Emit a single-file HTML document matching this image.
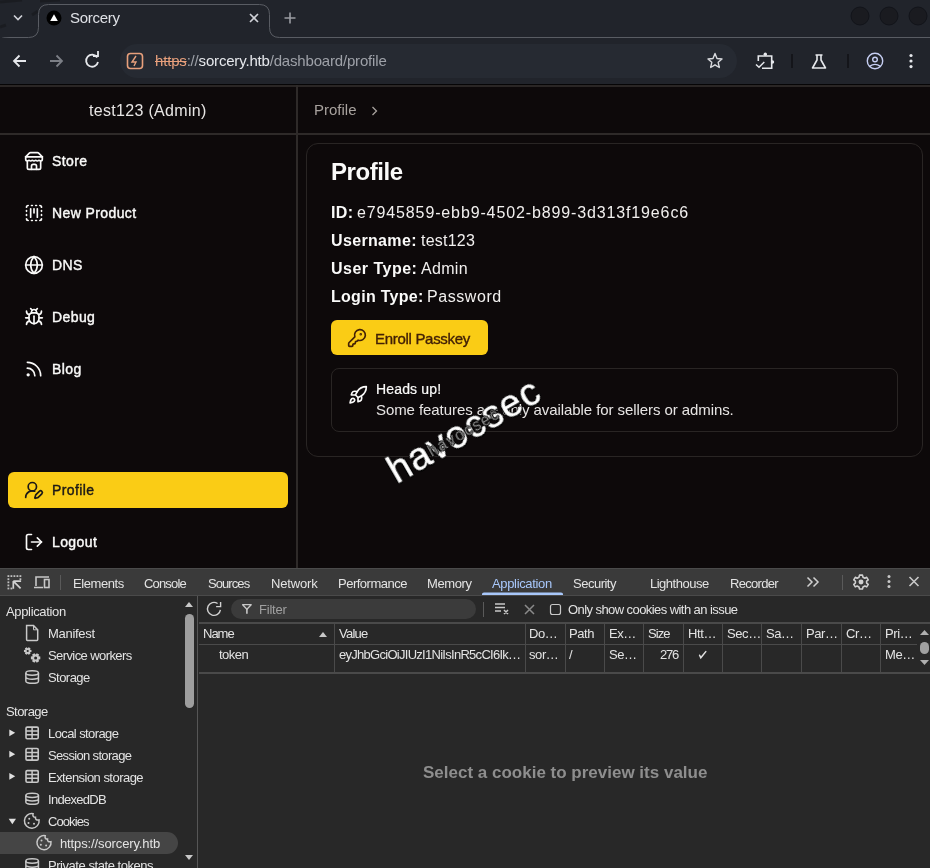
<!DOCTYPE html>
<html><head><meta charset="utf-8">
<style>
*{box-sizing:border-box;margin:0;padding:0}
html,body{width:930px;height:868px;overflow:hidden;background:#0d090a;font-family:"Liberation Sans",sans-serif}
.abs{position:absolute}
#strip{left:0;top:0;width:930px;height:38px;background:#21242b}
#toolbar{left:0;top:38px;width:930px;height:46px;background:#21242b}
#page{left:0;top:85px;width:930px;height:483px;background:#0d090a;color:#fafaf9}
#dev{left:0;top:568px;width:930px;height:300px;background:#282828;color:#e3e3e3}
.nav{left:52px;font-size:14px;-webkit-text-stroke:0.4px currentColor;letter-spacing:0.4px;color:#fafaf9}
.info{left:331px;font-size:16px;color:#f2f0ef}
.lb{font-weight:bold;color:#fafaf9}
.dt{top:8.5px;font-size:13px;color:#e3e3e3}
.ds{font-size:13px;color:#e3e3e3}
.dd{font-size:13px;letter-spacing:-0.4px;color:#e3e3e3}
.t{position:absolute;white-space:nowrap;line-height:1;will-change:transform}
svg{position:absolute;overflow:visible}
</style></head><body>

<!-- TAB STRIP -->
<div id="strip" class="abs">
  <svg width="930" height="38" style="left:0;top:0">
    <path d="M0 27 L6 25 M32 15 L38 11 M0 2 L22 0 M40 1 L60 0" stroke="#17181c" stroke-width="3" opacity=".6"/>
    <path d="M38.5 14.5 Q38.5 4.5 48.5 4.5 L259.5 4.5 Q269.5 4.5 269.5 14.5 L269.5 38 L38.5 38 Z" fill="#21242b"/>
    <path d="M0 39 Q2 37.5 10 37.5 L28.5 37.5 Q38.5 37.5 38.5 27.5 L38.5 14.5 Q38.5 4.5 48.5 4.5 L259.5 4.5 Q269.5 4.5 269.5 14.5 L269.5 27.5 Q269.5 37.5 279.5 37.5 L930 37.5" fill="none" stroke="#595c63" stroke-width="1"/>
    <path d="M14 15.5 L18 19.5 L22 15.5" fill="none" stroke="#d0d2d8" stroke-width="1.6"/>
    <circle cx="54" cy="18" r="7.5" fill="#000"/>
    <path d="M54 14.3 L57.8 21 L50.2 21 Z" fill="#fff"/>
    <path d="M250 14 L258 22 M258 14 L250 22" stroke="#d0d2d8" stroke-width="1.6"/>
    <path d="M290 12.5 L290 23.5 M284.5 18 L295.5 18" stroke="#9a9ca2" stroke-width="1.6"/>
    <circle cx="860" cy="16" r="9" fill="#1a1b20" stroke="#12141a" stroke-width="1"/>
    <circle cx="889" cy="16" r="9" fill="#1a1b20" stroke="#12141a" stroke-width="1"/>
    <circle cx="918" cy="16" r="9" fill="#1a1b20" stroke="#12141a" stroke-width="1"/>
  </svg>
  <div class="t" style="left:70px;top:10px;font-size:15px;letter-spacing:-0.28px;color:#dfe1e6">Sorcery</div>
</div>

<!-- TOOLBAR -->
<div id="toolbar" class="abs">
  <div class="abs" style="left:120px;top:6px;width:617px;height:34px;border-radius:17px;background:#262a32"></div>
  <svg width="930" height="46" style="left:0;top:0">
    <path d="M26 23 L14 23 M19.5 17.5 L14 23 L19.5 28.5" fill="none" stroke="#e6e8ec" stroke-width="1.8"/>
    <path d="M50 23 L62 23 M56.5 17.5 L62 23 L56.5 28.5" fill="none" stroke="#7c7f86" stroke-width="1.8"/>
    <path d="M97.2 19.5 A6 6 0 1 0 98 24" fill="none" stroke="#e6e8ec" stroke-width="1.8"/>
    <path d="M93 18 L98 18 L98 13" fill="none" stroke="#e6e8ec" stroke-width="1.8"/>
    <rect x="127.5" y="15.5" width="15" height="15" rx="3" fill="none" stroke="#e8a07c" stroke-width="1.6"/>
    <path d="M136 18 L132 24 L136 24 L134 28" fill="none" stroke="#e8a07c" stroke-width="1.4"/>
    <path d="M715 15.5 L717 20.5 L722 21 L718.2 24.3 L719.3 29.5 L715 26.8 L710.7 29.5 L711.8 24.3 L708 21 L713 20.5 Z" fill="none" stroke="#d8dade" stroke-width="1.4" stroke-linejoin="round"/>
    <path d="M758.3 23 L758.3 18 L771.7 18 L771.7 30.3 L762 30.3" fill="none" stroke="#e6e8ec" stroke-width="1.6"/>
    <circle cx="765.3" cy="16.3" r="1.7" fill="#e6e8ec"/><circle cx="772.5" cy="24" r="1.7" fill="#e6e8ec"/>
    <path d="M756 26.5 L759 29.3 L764.3 24" fill="none" stroke="#e6e8ec" stroke-width="1.5"/>
    <line x1="792" y1="16" x2="792" y2="30" stroke="#101116" stroke-width="1.5"/>
    <path d="M815.5 17 L822.5 17 M817 17 L817 22 L812.5 30 L825.5 30 L821 22 L821 17" fill="none" stroke="#e6e8ec" stroke-width="1.6" stroke-linejoin="round"/>
    <line x1="848" y1="16" x2="848" y2="30" stroke="#101116" stroke-width="1.5"/>
    <circle cx="875" cy="23" r="7.7" fill="none" stroke="#c6cef2" stroke-width="1.4"/>
    <circle cx="875" cy="21.5" r="2.3" fill="none" stroke="#c6cef2" stroke-width="1.4"/>
    <path d="M869.6 28.4 Q875 24.3 880.4 28.4" fill="none" stroke="#c6cef2" stroke-width="1.4"/>
    <circle cx="911" cy="17.5" r="1.6" fill="#e6e8ec"/>
    <circle cx="911" cy="23" r="1.6" fill="#e6e8ec"/>
    <circle cx="911" cy="28.6" r="1.6" fill="#e6e8ec"/>
  </svg>
  <div class="t" style="left:155px;top:15.3px;font-size:15px;letter-spacing:-0.18px;color:#9ea1a8"><span style="color:#e8a07c;text-decoration:line-through">https</span>://<span style="color:#e6e8ec">sorcery.htb</span>/dashboard/profile</div>
</div>
<div class="abs" style="left:0;top:84px;width:930px;height:1px;background:#060506"></div>

<!-- PAGE -->
<div id="page" class="abs">
  <!-- sidebar -->
  <div class="abs" style="left:0;top:0;width:930px;height:2px;background:#2a2625"></div>
  <div class="abs" style="left:296px;top:0;width:2px;height:483px;background:#2e2a29"></div>
  <div class="abs" style="left:0;top:48px;width:930px;height:2px;background:#2e2a29"></div>
  <div class="t" id="huser" style="left:89px;top:17.5px;font-size:16px;letter-spacing:0.31px;color:#e7e5e4">test123 (Admin)</div>
  <div class="t" style="left:314px;top:17px;font-size:15px;color:#a8a29e">Profile</div>
  <svg width="8" height="10" style="left:371px;top:21px"><path d="M1.5 1 L5.5 5 L1.5 9" fill="none" stroke="#a8a29e" stroke-width="1.3"/></svg>

  <!-- nav -->
  <svg width="20" height="20" viewBox="0 0 24 24" style="left:24px;top:66px" fill="none" stroke="#fafaf9" stroke-width="2" stroke-linecap="round" stroke-linejoin="round"><path d="m2 7 4.41-4.41A2 2 0 0 1 7.83 2h8.34a2 2 0 0 1 1.42.59L22 7"/><path d="M4 12v8a2 2 0 0 0 2 2h12a2 2 0 0 0 2-2v-8"/><path d="M15 22v-4a2 2 0 0 0-2-2h-2a2 2 0 0 0-2 2v4"/><path d="M2 7h20"/><path d="M22 7v3a2 2 0 0 1-2 2a2.7 2.7 0 0 1-1.59-.63.7.7 0 0 0-.82 0A2.7 2.7 0 0 1 16 12a2.7 2.7 0 0 1-1.59-.63.7.7 0 0 0-.82 0A2.7 2.7 0 0 1 12 12a2.7 2.7 0 0 1-1.59-.63.7.7 0 0 0-.82 0A2.7 2.7 0 0 1 8 12a2.7 2.7 0 0 1-1.59-.63.7.7 0 0 0-.82 0A2.7 2.7 0 0 1 4 12a2 2 0 0 1-2-2V7"/></svg>
  <div class="t nav" style="top:68.8px">Store</div>

  <svg width="20" height="20" viewBox="0 0 24 24" style="left:24px;top:118px" fill="none" stroke="#fafaf9" stroke-width="2" stroke-linecap="round" stroke-linejoin="round"><path d="M5 3a2 2 0 0 0-2 2"/><path d="M19 3a2 2 0 0 1 2 2"/><path d="M21 19a2 2 0 0 1-2 2"/><path d="M5 21a2 2 0 0 1-2-2"/><path d="M9 3h1"/><path d="M9 21h1"/><path d="M14 3h1"/><path d="M14 21h1"/><path d="M3 9v1"/><path d="M21 9v1"/><path d="M3 14v1"/><path d="M21 14v1"/><path d="M8 7v10"/><path d="M12 7v5"/><path d="M16 7v10"/></svg>
  <div class="t nav" style="top:120.8px">New Product</div>

  <svg width="20" height="20" viewBox="0 0 24 24" style="left:24px;top:170px" fill="none" stroke="#fafaf9" stroke-width="2" stroke-linecap="round" stroke-linejoin="round"><circle cx="12" cy="12" r="10"/><path d="M12 2a14.5 14.5 0 0 0 0 20 14.5 14.5 0 0 0 0-20"/><path d="M2 12h20"/></svg>
  <div class="t nav" style="top:172.8px">DNS</div>

  <svg width="20" height="20" viewBox="0 0 24 24" style="left:24px;top:222px" fill="none" stroke="#fafaf9" stroke-width="2" stroke-linecap="round" stroke-linejoin="round"><path d="m8 2 1.88 1.88"/><path d="M14.12 3.88 16 2"/><path d="M9 7.13v-1a3.003 3.003 0 1 1 6 0v1"/><path d="M12 20c-3.3 0-6-2.7-6-6v-3a4 4 0 0 1 4-4h4a4 4 0 0 1 4 4v3c0 3.3-2.7 6-6 6"/><path d="M12 20v-9"/><path d="M6.53 9C4.6 8.8 3 7.1 3 5"/><path d="M6 13H2"/><path d="M3 21c0-2.1 1.7-3.9 3.8-4"/><path d="M20.97 5c0 2.1-1.6 3.8-3.5 4"/><path d="M22 13h-4"/><path d="M17.2 17c2.1.1 3.8 1.9 3.8 4"/></svg>
  <div class="t nav" style="top:224.8px">Debug</div>

  <svg width="20" height="20" viewBox="0 0 24 24" style="left:24px;top:274px" fill="none" stroke="#fafaf9" stroke-width="2" stroke-linecap="round" stroke-linejoin="round"><path d="M4 11a9 9 0 0 1 9 9"/><path d="M4 4a16 16 0 0 1 16 16"/><circle cx="5" cy="19" r="1"/></svg>
  <div class="t nav" style="top:276.8px">Blog</div>

  <div class="abs" style="left:8px;top:387px;width:280px;height:36px;border-radius:6px;background:#facc15"></div>
  <svg width="20" height="20" viewBox="0 0 24 24" style="left:24px;top:395px" fill="none" stroke="#1c1917" stroke-width="2" stroke-linecap="round" stroke-linejoin="round"><path d="M2 21a8 8 0 0 1 10.821-7.487"/><path d="M21.378 16.626a1 1 0 0 0-3.004-3.004l-4.01 4.012a2 2 0 0 0-.506.854l-.837 2.87a.5.5 0 0 0 .62.62l2.87-.837a2 2 0 0 0 .854-.506z"/><circle cx="10" cy="8" r="5"/></svg>
  <div class="t nav" style="top:397.8px;color:#1c1917">Profile</div>

  <svg width="20" height="20" viewBox="0 0 24 24" style="left:24px;top:446.5px" fill="none" stroke="#fafaf9" stroke-width="2" stroke-linecap="round" stroke-linejoin="round"><path d="M9 21H5a2 2 0 0 1-2-2V5a2 2 0 0 1 2-2h4"/><polyline points="16 17 21 12 16 7"/><line x1="21" x2="9" y1="12" y2="12"/></svg>
  <div class="t nav" style="top:449.8px">Logout</div>

  <!-- card -->
  <div class="abs" style="left:306px;top:58px;width:617px;height:314px;border:1px solid #292524;border-radius:12px"></div>
  <div class="t" style="left:331px;top:74.7px;font-size:24px;font-weight:bold;letter-spacing:-0.42px;color:#fafaf9">Profile</div>
  <div class="t info lb" style="top:119.5px;letter-spacing:0.35px">ID:</div><div class="t info" style="left:357px;top:119.5px;letter-spacing:0.87px">e7945859-ebb9-4502-b899-3d313f19e6c6</div>
  <div class="t info lb" style="top:147.5px;letter-spacing:0.35px">Username:</div><div class="t info" style="left:421px;top:147.5px;letter-spacing:0.23px">test123</div>
  <div class="t info lb" style="top:175.5px;letter-spacing:0.49px">User Type:</div><div class="t info" style="left:421px;top:175.5px;letter-spacing:0.32px">Admin</div>
  <div class="t info lb" style="top:203.5px;letter-spacing:0.28px">Login Type:</div><div class="t info" style="left:427px;top:203.5px;letter-spacing:0.56px">Password</div>

  <div class="abs" style="left:331px;top:235px;width:157px;height:35px;border-radius:6px;background:#facc15"></div>
  <svg width="20" height="20" viewBox="0 0 24 24" style="left:346.5px;top:243px" fill="none" stroke="#422006" stroke-width="2" stroke-linecap="round" stroke-linejoin="round"><path d="M2.586 17.414A2 2 0 0 0 2 18.828V21a1 1 0 0 0 1 1h3a1 1 0 0 0 1-1v-1a1 1 0 0 1 1-1h1a1 1 0 0 0 1-1v-1a1 1 0 0 1 1-1h.172a2 2 0 0 0 1.414-.586l.814-.814a6.5 6.5 0 1 0-4-4z"/><circle cx="16.5" cy="7.5" r=".5" fill="#422006"/></svg>
  <div class="t" style="left:375px;top:246px;font-size:15px;letter-spacing:-0.3px;-webkit-text-stroke:0.35px #422006;color:#422006">Enroll Passkey</div>

  <div class="abs" style="left:331px;top:283px;width:567px;height:64px;border:1px solid #292524;border-radius:8px"></div>
  <svg width="20" height="20" viewBox="0 0 24 24" style="left:347.6px;top:300.4px" fill="none" stroke="#fafaf9" stroke-width="2" stroke-linecap="round" stroke-linejoin="round"><path d="M4.5 16.5c-1.5 1.26-2 5-2 5s3.74-.5 5-2c.71-.84.7-2.13-.09-2.91a2.18 2.18 0 0 0-2.91-.09z"/><path d="m12 15-3-3a22 22 0 0 1 2-3.95A12.88 12.88 0 0 1 22 2c0 2.72-.78 7.5-6 11a22.35 22.35 0 0 1-4 2z"/><path d="M9 12H4s.55-3.03 2-4c1.62-1.08 5 0 5 0"/><path d="M12 15v5s3.03-.55 4-2c1.08-1.62 0-5 0-5"/></svg>
  <div class="t" style="left:376px;top:296.5px;font-size:14px;letter-spacing:0.15px;-webkit-text-stroke:0.2px #fafaf9;color:#fafaf9">Heads up!</div>
  <div class="t" style="left:376px;top:316.5px;font-size:15px;letter-spacing:-0.075px;color:#e7e5e4">Some features are only available for sellers or admins.</div>

  <!-- watermark -->
  <div class="t" style="left:397px;top:366.5px;font-size:38px;letter-spacing:1.2px;color:#fff;-webkit-text-stroke:0.5px #fff;transform-origin:0 32.2px;transform:rotate(-30deg);text-shadow:1.5px 0 #000,-1.5px 0 #000,0 1.5px #000,0 -1.5px #000">havocsec</div>
  <div class="t" style="left:432px;top:359px;font-size:16px;letter-spacing:1.6px;color:#8c8c8c;transform-origin:0 13.5px;transform:rotate(-30deg);text-shadow:1px 0 #000,-1px 0 #000,0 1px #000,0 -1px #000">havocsec</div>
</div>

<!-- DEVTOOLS -->
<div id="dev" class="abs">
  <!-- tab bar -->
  <div class="abs" style="left:0;top:0;width:930px;height:1px;background:#4a4a4a"></div>
  <div class="abs" style="left:0;top:1px;width:930px;height:26px;background:#3a3a3a"></div>
  <div class="abs" style="left:0;top:27px;width:930px;height:1px;background:#4a4a4a"></div>
  <svg width="930" height="28" style="left:0;top:0">
    <g fill="#c0c0c0"><rect x="7.5" y="7.2" width="1.8" height="1.8"/><rect x="10.5" y="7.2" width="1.8" height="1.8"/><rect x="13.5" y="7.2" width="1.8" height="1.8"/><rect x="16.5" y="7.2" width="1.8" height="1.8"/><rect x="19.5" y="7.2" width="1.8" height="1.8"/><rect x="7.5" y="10.3" width="1.8" height="1.8"/><rect x="7.5" y="13.4" width="1.8" height="1.8"/><rect x="7.5" y="16.5" width="1.8" height="1.8"/><rect x="7.5" y="19.6" width="1.8" height="1.8"/><rect x="10.5" y="19.6" width="1.8" height="1.8"/><rect x="19.5" y="10.3" width="1.8" height="1.8"/></g>
    <path d="M13.3 13.1 L20.6 20.4 M13.3 13.1 L21.1 13.1 M13.3 13.1 L13.3 20.8" fill="none" stroke="#d0d0d0" stroke-width="1.7"/>
    <path d="M36 18 L36 9 L49 9 M34 19.5 L43 19.5" fill="none" stroke="#c8c8c8" stroke-width="1.6"/>
    <rect x="44.5" y="11.5" width="4.5" height="8" fill="none" stroke="#c8c8c8" stroke-width="1.6"/>
    <line x1="60.5" y1="7" x2="60.5" y2="22" stroke="#5a5a5a"/>
    <path d="M807.5 9.5 L812 14 L807.5 18.5 M813.5 9.5 L818 14 L813.5 18.5" fill="none" stroke="#d0d0d0" stroke-width="1.5"/>
    <line x1="842.5" y1="7" x2="842.5" y2="22" stroke="#5a5a5a"/>
    <g transform="translate(861,14.1) scale(0.92)">
      <path d="M-1.6 -7.6 L1.6 -7.6 L2.2 -5.3 L4.2 -4.2 L6.2 -5.2 L7.9 -2.4 L6.1 -1.1 L6.1 1.1 L7.9 2.4 L6.2 5.2 L4.2 4.2 L2.2 5.3 L1.6 7.6 L-1.6 7.6 L-2.2 5.3 L-4.2 4.2 L-6.2 5.2 L-7.9 2.4 L-6.1 1.1 L-6.1 -1.1 L-7.9 -2.4 L-6.2 -5.2 L-4.2 -4.2 L-2.2 -5.3 Z" fill="none" stroke="#d0d0d0" stroke-width="1.7" stroke-linejoin="round"/>
      <circle cx="0" cy="0" r="2.7" fill="#d0d0d0"/>
    </g>
    <circle cx="889" cy="8.5" r="1.5" fill="#c8c8c8"/><circle cx="889" cy="13.5" r="1.5" fill="#c8c8c8"/><circle cx="889" cy="18.5" r="1.5" fill="#c8c8c8"/>
    <path d="M909.5 9 L918.5 18 M918.5 9 L909.5 18" stroke="#c8c8c8" stroke-width="1.6"/>
    <path d="M482 27 L482 26 Q482 24.5 484 24.5 L561 24.5 Q563 24.5 563 26 L563 27 Z" fill="#a8c7fa"/>
  </svg>
  <div class="t dt" style="left:73px;letter-spacing:-0.43px">Elements</div>
  <div class="t dt" style="left:144px;letter-spacing:-0.83px">Console</div>
  <div class="t dt" style="left:208px;letter-spacing:-0.92px">Sources</div>
  <div class="t dt" style="left:271px;letter-spacing:-0.17px">Network</div>
  <div class="t dt" style="left:338px;letter-spacing:-0.5px">Performance</div>
  <div class="t dt" style="left:427px;letter-spacing:-0.4px">Memory</div>
  <div class="t dt" style="left:492px;letter-spacing:-0.34px;color:#a8c7fa">Application</div>
  <div class="t dt" style="left:573px;letter-spacing:-0.5px">Security</div>
  <div class="t dt" style="left:650px;letter-spacing:-0.5px">Lighthouse</div>
  <div class="t dt" style="left:730px;letter-spacing:-0.71px">Recorder</div>

  <!-- sidebar -->
  <div class="abs" style="left:197px;top:28px;width:1px;height:272px;background:#565656"></div>
  <div class="abs" style="left:185px;top:46px;width:9px;height:94px;border-radius:5px;background:#9e9e9e"></div>
  <svg width="14" height="300" style="left:183px;top:0">
    <path d="M2 39 L6 34 L10 39 Z" fill="#c8c8c8"/>
    <path d="M2 287 L6 292 L10 287 Z" fill="#c8c8c8"/>
  </svg>
  <div class="abs" style="left:0;top:264px;width:178px;height:22px;border-radius:0 11px 11px 0;background:#454545"></div>
  <div class="t ds" style="left:6px;top:37px;letter-spacing:-0.34px">Application</div>
  <div class="t ds" style="left:48px;top:59px;letter-spacing:-0.3px">Manifest</div>
  <div class="t ds" style="left:48px;top:81px;letter-spacing:-0.59px">Service workers</div>
  <div class="t ds" style="left:48px;top:103px;letter-spacing:-0.55px">Storage</div>
  <div class="t ds" style="left:6px;top:137px;letter-spacing:-0.55px">Storage</div>
  <div class="t ds" style="left:48px;top:159px;letter-spacing:-0.59px">Local storage</div>
  <div class="t ds" style="left:48px;top:181px;letter-spacing:-0.66px">Session storage</div>
  <div class="t ds" style="left:48px;top:203px;letter-spacing:-0.53px">Extension storage</div>
  <div class="t ds" style="left:48px;top:225px;letter-spacing:-0.7px">IndexedDB</div>
  <div class="t ds" style="left:48px;top:247px;letter-spacing:-0.92px">Cookies</div>
  <div class="t ds" style="left:60px;top:269px;letter-spacing:-0.12px">https://sorcery.htb</div>
  <div class="t ds" style="left:48px;top:291px;letter-spacing:-0.45px">Private state tokens</div>
  <svg width="60" height="300" style="left:0;top:0" fill="none" stroke="#c8c8c8" stroke-width="1.5"><path d="M26.6 57.6 L33.5 57.6 L37.7 61.8 L37.7 71.6 Q37.7 72.4 36.9 72.4 L27.4 72.4 Q26.6 72.4 26.6 71.6 Z"/><path d="M33.5 57.6 L33.5 61.8 L37.7 61.8" stroke-width="1"/><path d="M31.45 81.92 L31.45 84.08 L30.10 84.31 L30.03 84.42 L30.51 85.71 L28.64 86.78 L27.76 85.73 L27.64 85.73 L26.76 86.78 L24.89 85.71 L25.37 84.42 L25.30 84.31 L23.95 84.08 L23.95 81.92 L25.30 81.69 L25.37 81.58 L24.89 80.29 L26.76 79.22 L27.64 80.27 L27.76 80.27 L28.64 79.22 L30.51 80.29 L30.03 81.58 L30.10 81.69 Z" fill="#c8c8c8" stroke="none"/><circle cx="27.7" cy="83" r="1.1" fill="#282828" stroke="none"/><path d="M40.31 88.55 L40.31 91.25 L38.61 91.54 L38.53 91.68 L39.13 93.30 L36.78 94.66 L35.68 93.33 L35.52 93.33 L34.42 94.66 L32.07 93.30 L32.67 91.68 L32.59 91.54 L30.89 91.25 L30.89 88.55 L32.59 88.26 L32.67 88.12 L32.07 86.50 L34.42 85.14 L35.52 86.47 L35.68 86.47 L36.78 85.14 L39.13 86.50 L38.53 88.12 L38.61 88.26 Z" fill="#c8c8c8" stroke="none"/><circle cx="35.6" cy="89.9" r="1.5" fill="#282828" stroke="none"/><ellipse cx="32.150000000000006" cy="104.95" rx="6.30" ry="2.2"/><path d="M25.85 104.95 L25.85 113.15 A6.30 2.2 0 0 0 38.45 113.15 L38.45 104.95 M25.85 109.05 A6.30 2.2 0 0 0 38.45 109.05"/><rect x="26.00" y="159.10" width="12.20" height="11.60" rx="1.2" stroke-width="1.6"/><path d="M26.00 163.00 L38.20 163.00 M26.00 166.80 L38.20 166.80 M32.10 159.10 L32.10 170.70" stroke-width="1.5"/><rect x="26.00" y="180.50" width="12.20" height="11.60" rx="1.2" stroke-width="1.6"/><path d="M26.00 184.40 L38.20 184.40 M26.00 188.20 L38.20 188.20 M32.10 180.50 L32.10 192.10" stroke-width="1.5"/><rect x="26.00" y="202.60" width="12.20" height="11.60" rx="1.2" stroke-width="1.6"/><path d="M26.00 206.50 L38.20 206.50 M26.00 210.30 L38.20 210.30 M32.10 202.60 L32.10 214.20" stroke-width="1.5"/><ellipse cx="32.150000000000006" cy="227.35" rx="6.30" ry="2.2"/><path d="M25.85 227.35 L25.85 234.15 A6.30 2.2 0 0 0 38.45 234.15 L38.45 227.35 M25.85 230.75 A6.30 2.2 0 0 0 38.45 230.75"/><path d="M33.08 245.66 A7.35 7.35 0 1 0 39.08 251.88 Q35.11 252.53 35.47 249.22 Q32.17 249.22 33.08 245.66 Z"/><circle cx="29.23" cy="250.69" r="1" fill="#c8c8c8" stroke="none"/><circle cx="28.49" cy="255.11" r="1" fill="#c8c8c8" stroke="none"/><circle cx="34.00" cy="255.84" r="1" fill="#c8c8c8" stroke="none"/><path d="M45.22 267.66 A7.05 7.05 0 1 0 50.98 273.62 Q47.17 274.25 47.52 271.08 Q44.35 271.08 45.22 267.66 Z"/><circle cx="41.53" cy="272.49" r="1" fill="#c8c8c8" stroke="none"/><circle cx="40.83" cy="276.72" r="1" fill="#c8c8c8" stroke="none"/><circle cx="46.12" cy="277.42" r="1" fill="#c8c8c8" stroke="none"/><ellipse cx="32.150000000000006" cy="292.95" rx="6.30" ry="2.2"/><path d="M25.85 292.95 L25.85 301.05 A6.30 2.2 0 0 0 38.45 301.05 L38.45 292.95 M25.85 297.00 A6.30 2.2 0 0 0 38.45 297.00"/></svg>
  <svg width="20" height="300" style="left:0;top:0">
    <path d="M9.3 161.4 L15.2 164.8 L9.3 168.2 Z" fill="#e0e0e0"/>
    <path d="M9.3 182.8 L15.2 186.2 L9.3 189.6 Z" fill="#e0e0e0"/>
    <path d="M9.3 204.9 L15.2 208.3 L9.3 211.7 Z" fill="#e0e0e0"/>
    <path d="M8.7 250.8 L16 250.8 L12.35 256.2 Z" fill="#e0e0e0"/>
  </svg>

  <!-- cookies toolbar -->
  <div class="abs" style="left:199px;top:53.5px;width:731px;height:2px;background:#4a4a4a"></div>
  <svg width="730" height="30" style="left:199px;top:28px">
    <path d="M18.6 7.5 A6.5 6.5 0 1 0 21.4 13.8" fill="none" stroke="#d0d0d0" stroke-width="1.4"/>
    <path d="M17.1 10.6 L21.6 10.6 L21.6 6.1" fill="none" stroke="#d0d0d0" stroke-width="1.4"/>
    <rect x="32" y="3" width="245" height="20" rx="10" fill="#3b3b3b"/>
    <path d="M43.6 8.7 L52.2 8.7 L47.9 13.3 Z" fill="none" stroke="#c8c8c8" stroke-width="1.3" stroke-linejoin="round"/><path d="M47.9 13 L47.9 17.7" stroke="#c8c8c8" stroke-width="1.6"/>
    <line x1="284.5" y1="6" x2="284.5" y2="21" stroke="#5a5a5a"/>
    <path d="M296 8 L306 8 M296 11.5 L306 11.5 M296 15 L302 15 M305 14 L309 18 M309 14 L305 18" fill="none" stroke="#c8c8c8" stroke-width="1.5"/>
    <path d="M326 9 L335 18 M335 9 L326 18" stroke="#8a8a8a" stroke-width="1.5"/>
    <rect x="351.5" y="8.5" width="10" height="10" rx="2" fill="none" stroke="#c8c8c8" stroke-width="1.2"/>
  </svg>
  <div class="t dd" style="left:259px;top:34.5px;letter-spacing:-0.2px;color:#a0a0a0">Filter</div>
  <div class="t dd" style="left:568px;top:35px;letter-spacing:-0.57px">Only show cookies with an issue</div>

  <!-- table -->
    <div class="abs" style="left:199px;top:76px;width:718px;height:1px;background:#4a4a4a"></div>
  <div class="abs" style="left:199px;top:104px;width:731px;height:2px;background:#4a4a4a"></div>
  <div class="abs" id="cols"></div>
  <svg width="930" height="300" style="left:0;top:0">
    <g stroke="#4a4a4a">
      <line x1="334.5" y1="55" x2="334.5" y2="104"/>
      <line x1="525.5" y1="55" x2="525.5" y2="104"/>
      <line x1="565.5" y1="55" x2="565.5" y2="104"/>
      <line x1="604.5" y1="55" x2="604.5" y2="104"/>
      <line x1="643.5" y1="55" x2="643.5" y2="104"/>
      <line x1="683.5" y1="55" x2="683.5" y2="104"/>
      <line x1="722.5" y1="55" x2="722.5" y2="104"/>
      <line x1="761.5" y1="55" x2="761.5" y2="104"/>
      <line x1="801.5" y1="55" x2="801.5" y2="104"/>
      <line x1="841.5" y1="55" x2="841.5" y2="104"/>
      <line x1="880.5" y1="55" x2="880.5" y2="104"/>
    </g>
    <path d="M319 69 L323 64 L327 69 Z" fill="#c8c8c8"/>
    <path d="M920 67 L924.5 62 L929 67 Z" fill="#b0b0b0"/>
    <rect x="920" y="74" width="9" height="12" rx="4.5" fill="#a0a0a0"/>
    <path d="M920 92 L929 92 L924.5 97 Z" fill="#b0b0b0"/>
  </svg>
  <div class="t dd" style="left:203px;top:59px;letter-spacing:-1px">Name</div>
  <div class="t dd" style="left:339px;top:59px;letter-spacing:-0.75px">Value</div>
  <div class="t dd" style="left:529px;top:59px">Do…</div>
  <div class="t dd" style="left:569px;top:59px">Path</div>
  <div class="t dd" style="left:609px;top:59px">Ex…</div>
  <div class="t dd" style="left:648px;top:59px;letter-spacing:-0.95px">Size</div>
  <div class="t dd" style="left:688px;top:59px">Htt…</div>
  <div class="t dd" style="left:727px;top:59px">Sec…</div>
  <div class="t dd" style="left:766px;top:59px">Sa…</div>
  <div class="t dd" style="left:806px;top:59px">Par…</div>
  <div class="t dd" style="left:846px;top:59px">Cr…</div>
  <div class="t dd" style="left:885px;top:59px">Pri…</div>

  <div class="t dd" style="left:219px;top:80px;letter-spacing:-0.5px">token</div>
  <div class="t dd" style="left:339px;top:80px;letter-spacing:-0.72px">eyJhbGciOiJIUzI1NiIsInR5cCI6Ik…</div>
  <div class="t dd" style="left:529px;top:80px">sor…</div>
  <div class="t dd" style="left:569px;top:80px">/</div>
  <div class="t dd" style="left:609px;top:80px">Se…</div>
  <div class="t dd" style="left:660px;top:80px;letter-spacing:-1.2px">276</div>
  <svg width="12" height="12" style="left:698px;top:83px"><path d="M1.6 4.2 L2.8 6.8 L7.8 0.6" fill="none" stroke="#e3e3e3" stroke-width="1.5" stroke-linecap="round"/></svg>
  <div class="t dd" style="left:885px;top:80px">Me…</div>

  <div class="t" style="left:423px;top:196px;font-size:17px;font-weight:bold;color:#8e8e8e">Select a cookie to preview its value</div>
</div>

</body></html>
